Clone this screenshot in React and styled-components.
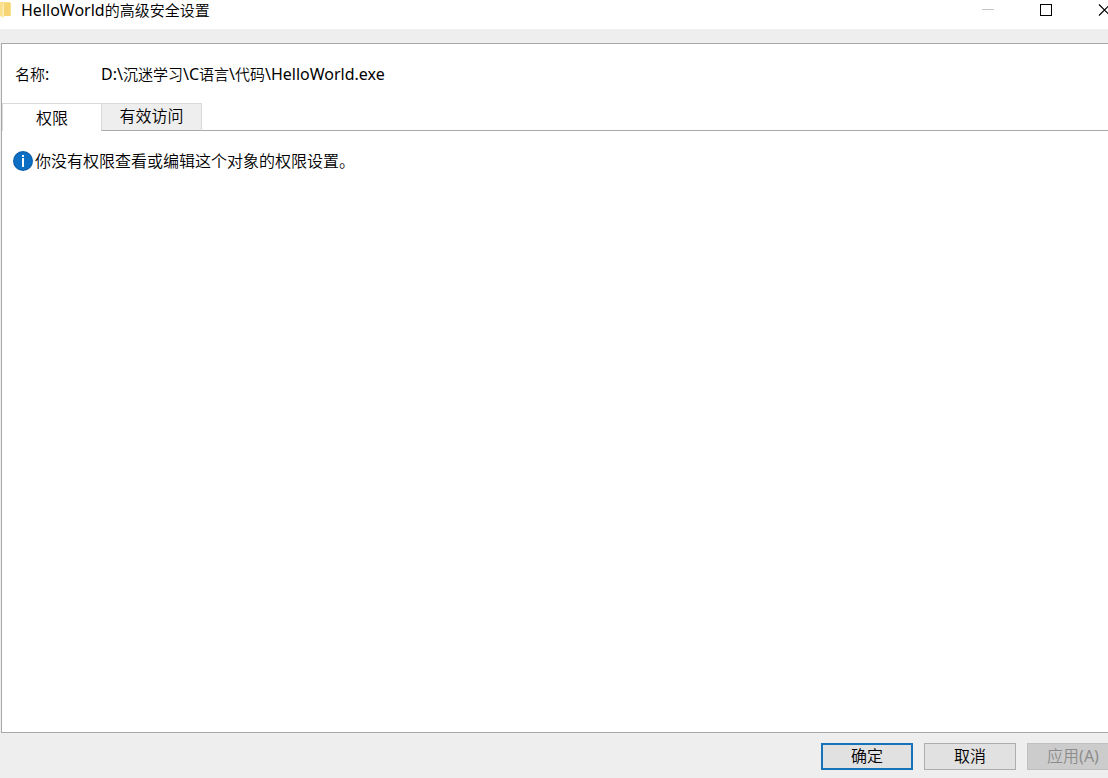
import { useState } from "react";
import styled, { createGlobalStyle } from "styled-components";

const tabs = [
  { id: "permissions", label: "权限" },
  { id: "access", label: "有效访问" },
];

export default function App() {
  const [active, setActive] = useState("permissions");

  return (
    <>
      <GlobalStyle />
      <Window>
        <TitleBar>
          <FolderIcon />
          <Title>
            <MixedText text="HelloWorld的高级安全设置" />
          </Title>
          <Caption type="button" aria-label="最小化" disabled>
            <svg width="12" height="12" viewBox="0 0 12 12">
              <path d="M0 5.5h12" stroke="#c4c4c4" />
            </svg>
          </Caption>
          <Caption type="button" aria-label="最大化">
            <svg width="12" height="12" viewBox="0 0 12 12">
              <rect x="0.5" y="0.5" width="11" height="11" fill="none" stroke="#000" />
            </svg>
          </Caption>
          <Caption type="button" aria-label="关闭">
            <svg width="12" height="12" viewBox="0 0 12 12">
              <path d="M1 0.5l11 11M12 0.5l-11 11" fill="none" stroke="#000" strokeWidth="1.2" />
            </svg>
          </Caption>
        </TitleBar>
        <Panel>
          <ObjectName>
            <dt>
              <MixedText text="名称:" />
            </dt>
            <dd>
              <MixedText text="D:\沉迷学习\C语言\代码\HelloWorld.exe" />
            </dd>
          </ObjectName>
          <TabList role="tablist">
            {tabs.map(({ id, label }) => (
              <Tab
                key={id}
                type="button"
                role="tab"
                aria-selected={active === id}
                $active={active === id}
                onClick={() => setActive(id)}
              >
                {label}
              </Tab>
            ))}
            <TabLine />
          </TabList>
          <Message role="tabpanel">
            <InfoIcon />
            <span>你没有权限查看或编辑这个对象的权限设置。</span>
          </Message>
        </Panel>
        <Footer>
          <Button type="button" $primary>确定</Button>
          <Button type="button">取消</Button>
          <Button type="button" disabled>
            <MixedText text="应用(A)" />
          </Button>
        </Footer>
      </Window>
    </>
  );
}

/* latin runs are set a little larger and heavier than the chinese around them */
function MixedText({ text }) {
  return text
    .split(/([\x20-\x7e]+)/)
    .filter(Boolean)
    .map((run, i) => (/^[\x20-\x7e]/.test(run) ? <Latin key={i}>{run}</Latin> : run));
}

function FolderIcon() {
  return (
    <svg width="12" height="20" viewBox="0 0 12 20" aria-hidden="true">
      <path d="M0 2h9l2 1v13H0z" fill="#fbe08c" />
      <path d="M4 3h6v13H4z" fill="#f8d573" />
      <path d="M0 2h4v16l-4-2z" fill="#fbdf8a" />
      <path d="M3 3h1v15l-2-1z" fill="#ffeebc" />
    </svg>
  );
}

function InfoIcon() {
  return (
    <svg width="20" height="20" viewBox="0 0 20 20" aria-hidden="true">
      <circle cx="10" cy="10" r="10" fill="#0a5ba6" />
      <circle cx="10" cy="10" r="9" fill="#0c6fc4" />
      <rect x="9" y="4" width="2" height="2" fill="#fff" />
      <rect x="9" y="7" width="2" height="9" fill="#fff" />
    </svg>
  );
}

const GlobalStyle = createGlobalStyle`
  * {
    box-sizing: border-box;
  }

  body {
    margin: 0;
    overflow: hidden;
    background: #eee;
    color: #000;
    font-family: "Noto Sans", "Noto Sans CJK SC", sans-serif;
    font-size: 16px;
    font-weight: 350;
    line-height: 20px;
  }

  button {
    font: inherit;
    color: inherit;
  }
`;

/* the dialog runs past the right edge of the screen */
const Window = styled.div`
  display: flex;
  flex-direction: column;
  width: calc(100% + 25px);
  min-height: 100vh;
`;

const TitleBar = styled.header`
  display: flex;
  align-items: flex-start;
  height: 29px;
  background: #fff;
`;

const Title = styled.h1`
  flex: 1;
  margin: 0;
  padding-left: 9px;
  font-size: 15px;
  font-weight: inherit;
  line-height: 20px;
`;

const Latin = styled.span`
  font-size: 16px;
  font-weight: 400;
`;

const Caption = styled.button`
  display: flex;
  align-items: center;
  justify-content: center;
  width: 58px;
  height: 20px;
  padding: 0;
  border: 0;
  background: transparent;
`;

const Panel = styled.main`
  flex: 1;
  margin: 14px 0 0 1px;
  border: 1px solid #a9a9a9;
  background: #fff;
`;

const ObjectName = styled.dl`
  display: flex;
  margin: 0;
  padding: 20px 13px 19px;
  font-size: 15px;

  dt {
    width: 86px;
  }

  dd {
    margin: 0;
  }
`;

const TabList = styled.div`
  display: flex;
  height: 28px;
`;

const Tab = styled.button`
  width: ${({ $active }) => ($active ? 99 : 101)}px;
  padding: ${({ $active }) => ($active ? "0" : "0 0 2px")};
  border: solid #d9d9d9;
  border-width: ${({ $active }) => ($active ? "1px 0 0 1px" : "1px")};
  border-bottom-color: #a9a9a9;
  background: ${({ $active }) => ($active ? "#fff" : "#eee")};
`;

const TabLine = styled.div`
  flex: 1;
  border-bottom: 1px solid #a9a9a9;
`;

const Message = styled.div`
  display: flex;
  align-items: center;
  gap: 2px;
  padding: 20px 11px;
`;

const Footer = styled.footer`
  display: flex;
  justify-content: flex-end;
  gap: 11px;
  padding: 10px 14px 8px;
`;

const Button = styled.button`
  width: 92px;
  height: 27px;
  padding: 0 0 2px;
  border: ${({ $primary }) => ($primary ? "2px solid #1673b9" : "1px solid #adadad")};
  background: #e1e1e1;

  &:disabled {
    border-color: #bfbfbf;
    background: #ccc;
    color: #8c8c8c;
  }
`;
